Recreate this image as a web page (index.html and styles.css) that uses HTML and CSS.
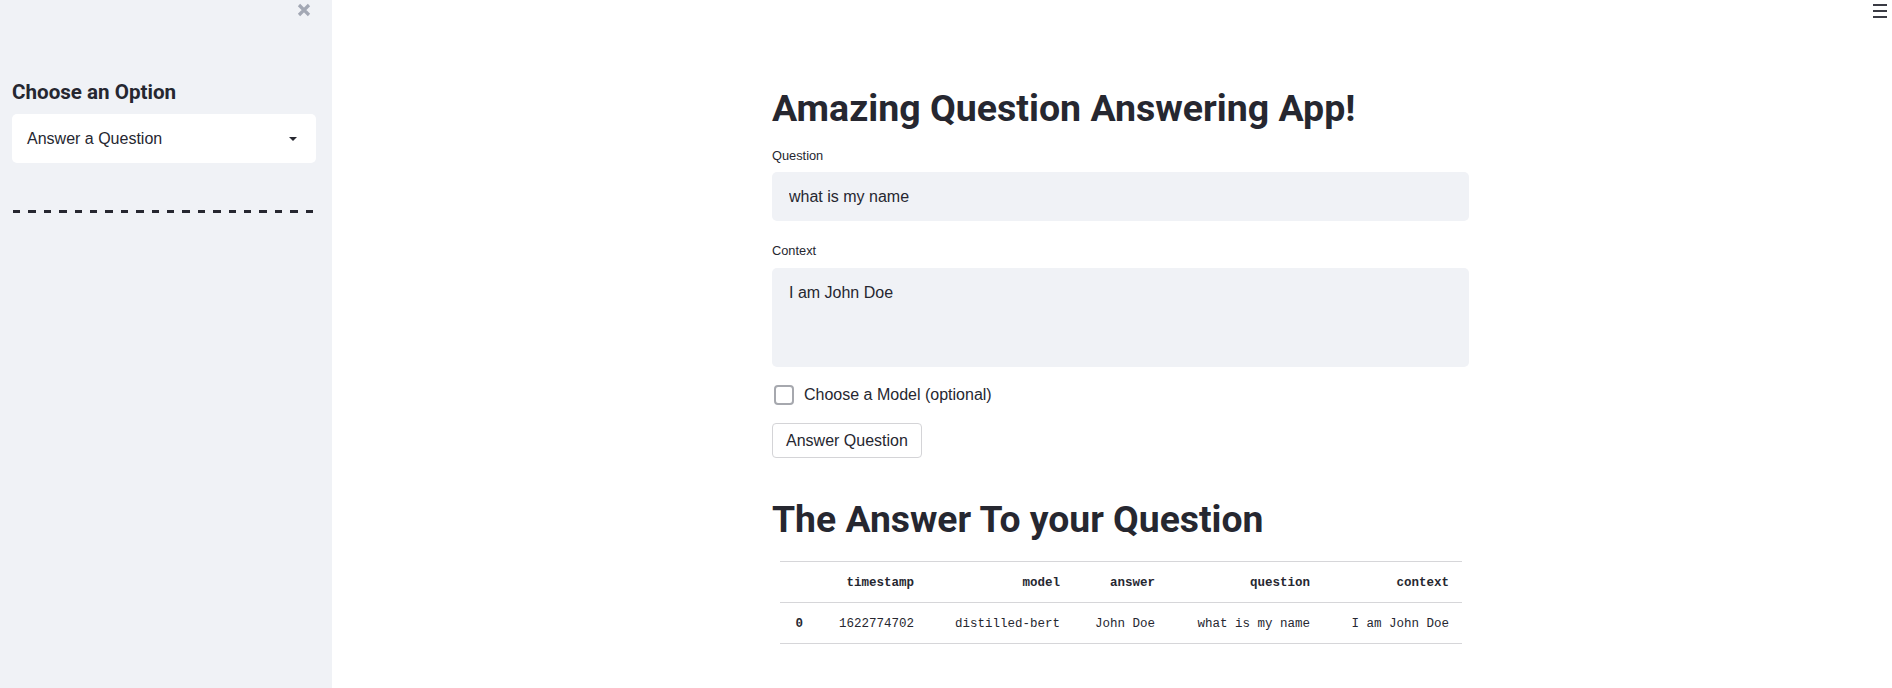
FILE: index.html
```html
<!DOCTYPE html>
<html lang="en">
<head>
<meta charset="utf-8">
<title>Amazing Question Answering App!</title>
<link rel="stylesheet" href="styles.css">
</head>
<body>
<div class="app">
  <aside class="sidebar">
    <div class="close-row">
      <button class="close-btn" aria-label="Close sidebar">
        <svg width="14" height="14" viewBox="0 0 14 14"><path d="M2 2L12 12M12 2L2 12" stroke="#a3a8b4" stroke-width="3.2" stroke-linecap="butt"/></svg>
      </button>
    </div>
    <h3 class="side-title">Choose an Option</h3>
    <div class="select">
      <span class="select-value">Answer a Question</span>
      <svg class="caret" width="8" height="4" viewBox="0 0 8 4"><path d="M0 0H8L4 4Z" fill="#262730"/></svg>
    </div>
    <div class="dashes" aria-label="- - - - - - - - - - - - - - - - - - - -"></div>
  </aside>

  <main class="main">
    <button class="menu-btn" aria-label="Menu">
      <svg width="14" height="14" viewBox="0 0 14 14"><rect x="0" y="0" width="14" height="2" fill="#3a3b44"/><rect x="0" y="6" width="14" height="2" fill="#3a3b44"/><rect x="0" y="12" width="14" height="2" fill="#3a3b44"/></svg>
    </button>
    <div class="block">
      <h1 class="heading">Amazing Question Answering App!</h1>

      <label class="field-label label-question" for="q">Question</label>
      <input class="text-input" id="q" type="text" value="what is my name" readonly>

      <label class="field-label label-context" for="c">Context</label>
      <textarea class="text-area" id="c" readonly>I am John Doe</textarea>

      <label class="check-row">
        <input class="check" type="checkbox">
        <span>Choose a Model (optional)</span>
      </label>

      <button class="btn">Answer Question</button>

      <h2 class="heading heading-2">The Answer To your Question</h2>

      <table class="answer-table">
        <colgroup>
          <col class="c-idx"><col class="c-ts"><col class="c-model"><col class="c-ans"><col class="c-q"><col class="c-ctx">
        </colgroup>
        <thead>
          <tr><th></th><th>timestamp</th><th>model</th><th>answer</th><th>question</th><th>context</th></tr>
        </thead>
        <tbody>
          <tr><th>0</th><td>1622774702</td><td>distilled-bert</td><td>John Doe</td><td>what is my name</td><td>I am John Doe</td></tr>
        </tbody>
      </table>
    </div>
  </main>
</div>
</body>
</html>
```

FILE: styles.css
```css
* { box-sizing: border-box; }

html, body {
  margin: 0;
  padding: 0;
  background: #ffffff;
}

body {
  font-family: "Liberation Sans", Arial, sans-serif;
  font-size: 16px;
  color: #262730;
}

.app {
  display: flex;
  height: 688px;
  overflow: hidden;
}

/* ---------- Sidebar ---------- */
.sidebar {
  width: 332px;
  flex: 0 0 332px;
  background: #f0f2f6;
  padding: 3px 16px 0 12px;
  display: flex;
  flex-direction: column;
}

.close-row {
  display: flex;
  justify-content: flex-end;
  height: 14px;
  padding-right: 5px;
}

.close-btn {
  border: 0;
  padding: 0;
  margin: 0;
  background: transparent;
  width: 14px;
  height: 14px;
  display: block;
  cursor: pointer;
}
.close-btn svg { display: block; }

.side-title {
  margin: 61px 0 0 0;
  font-family: Roboto, "Liberation Sans", sans-serif;
  font-weight: 700;
  font-size: 20.6px;
  line-height: 28px;
  color: #262730;
}

.select {
  margin-top: 8px;
  height: 49px;
  background: #ffffff;
  border-radius: 5px;
  display: flex;
  align-items: center;
  justify-content: space-between;
  padding: 0 19px 0 15px;
  line-height: 49px;
}
.select-value { font-size: 16px; }
.caret { display: block; margin-top: 1px; }

.dashes {
  margin: 47px 0 0 1px;
  width: 300px;
  height: 3px;
  background: repeating-linear-gradient(to right, #262730 0 7.3px, transparent 7.3px 15.4px);
}

/* ---------- Main ---------- */
.main {
  flex: 1;
  position: relative;
  background: #ffffff;
}

.menu-btn {
  position: absolute;
  top: 4px;
  right: 5px;
  border: 0;
  padding: 0;
  background: transparent;
  width: 14px;
  height: 14px;
}
.menu-btn svg { display: block; }

.block {
  padding: 86px 0 0 440px;
  width: 1137px;
  display: flex;
  flex-direction: column;
  align-items: flex-start;
}

.heading {
  margin: 0;
  font-family: Roboto, "Liberation Sans", sans-serif;
  font-weight: 700;
  font-size: 37.5px;
  line-height: 45px;
  color: #262730;
  white-space: nowrap;
}

.heading-2 { margin-top: 39px; font-size: 37.3px; }

.field-label {
  display: block;
  font-size: 12.8px;
  line-height: 16px;
  color: #262730;
}
.label-question { margin-top: 17px; margin-bottom: 8px; }
.label-context { margin-top: 22px; margin-bottom: 9px; }

.text-input,
.text-area {
  display: block;
  width: 697px;
  border: 0;
  outline: none;
  background: #f0f2f6;
  border-radius: 5px;
  font-family: "Liberation Sans", Arial, sans-serif;
  font-size: 16px;
  color: #262730;
  margin: 0;
}

.text-input {
  height: 49px;
  padding: 0 17px;
}

.text-area {
  height: 99px;
  padding: 15px 17px 0 17px;
  line-height: 19px;
  resize: none;
  overflow: hidden;
}

.check-row {
  margin-top: 16px;
  height: 24px;
  display: flex;
  align-items: center;
  gap: 10px;
  line-height: 24px;
  font-size: 16px;
}

.check {
  appearance: none;
  -webkit-appearance: none;
  width: 20px;
  height: 20px;
  margin: 0 0 0 2px;
  border: 2px solid #a6a8ae;
  border-radius: 4px;
  background: #ffffff;
}

.btn {
  margin-top: 16px;
  height: 35px;
  padding: 1px 13px 0 13px;
  border: 1px solid #d4d4d7;
  border-radius: 4px;
  background: #ffffff;
  font-family: "Liberation Sans", Arial, sans-serif;
  font-size: 16px;
  line-height: 32px;
  color: #262730;
}

/* ---------- Table ---------- */
.answer-table {
  margin: 19px 0 0 8px;
  width: 682px;
  table-layout: fixed;
  border-collapse: collapse;
  border-top: 1px solid #d6d6d9;
  font-family: "Liberation Mono", "Courier New", monospace;
  font-size: 12.5px;
  color: #262730;
}

.c-idx { width: 36px; }
.c-ts { width: 111px; }
.c-model { width: 146px; }
.c-ans { width: 95px; }
.c-q { width: 155px; }
.c-ctx { width: 139px; }

.answer-table th,
.answer-table td {
  height: 41px;
  padding: 1px 13px 0 0;
  text-align: right;
  vertical-align: middle;
  border-bottom: 1px solid #d6d6d9;
  white-space: nowrap;
  line-height: 14px;
}

.answer-table th { font-weight: 700; }
.answer-table td { font-weight: 400; }
```
